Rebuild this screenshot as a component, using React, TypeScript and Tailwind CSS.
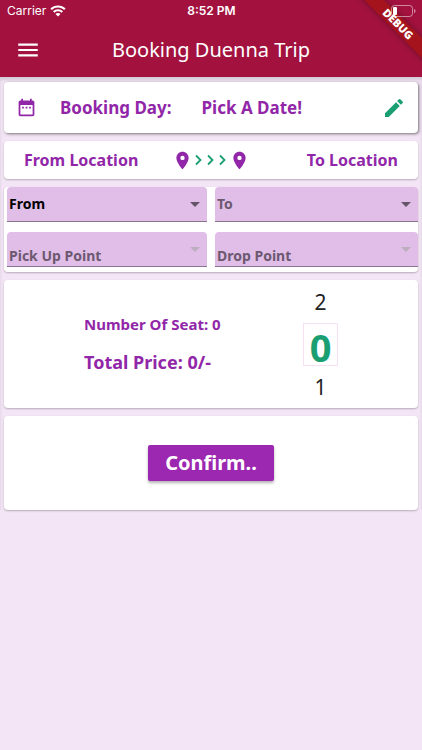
import React, { useState } from "react";
import { MdMenu, MdEdit, MdLocationOn, MdArrowDropDown } from "react-icons/md";

const CARD = "rounded bg-white shadow-[0_1px_2px_rgba(0,0,0,0.25)]";

interface PlaceSelectProps {
  label: string;
  active?: boolean;
  disabled?: boolean;
}

function PlaceSelect({ label, active, disabled }: PlaceSelectProps) {
  return (
    <div className="relative">
      <select
        aria-label={label}
        disabled={disabled}
        className={`block h-[35px] w-full appearance-none rounded-t border-b border-[#8b748f] bg-[#e1bee7] px-[2px] text-[14px] leading-5 font-bold opacity-100 outline-none ${
          active ? "text-black" : "text-[#6c5870]"
        } ${disabled ? "pt-[14px]" : ""}`}
      >
        <option>{label}</option>
      </select>
      <MdArrowDropDown
        className={`pointer-events-none absolute top-[5px] right-0 h-6 w-6 ${
          disabled ? "text-[#bcaebf]" : "text-[#655569]"
        }`}
      />
    </div>
  );
}

function StatusBar() {
  return (
    <div className="relative z-10 grid h-[22px] grid-cols-3 items-center pr-[6px] pl-[7px] font-[Inter,sans-serif] text-[12px] leading-4">
      <div className="flex items-center gap-1">
        <span>Carrier</span>
        <svg viewBox="0 0 16 12" className="h-3 w-4" fill="currentColor">
          <path d="M8 0.5C5 .5 2.400 1.600.4 3.500l1.500 1.500A8.700 8.700 0 0 1 8 2.600c2.400 0 4.500.9 6.100 2.400l1.500-1.500C13.600 1.600 11 .5 8 .5z" />
          <path d="M8 4.200c-1.900 0-3.700.8-5 2l1.500 1.500A5 5 0 0 1 8 6.300a5 5 0 0 1 3.500 1.400L13 6.200a7.200 7.200 0 0 0-5-2z" />
          <path d="M8 7.900c-1 0-1.900.4-2.500 1L8 11.500l2.500-2.600c-.6-.6-1.500-1-2.500-1z" />
        </svg>
      </div>
      <span className="text-center font-semibold">8:52 PM</span>
      <svg viewBox="0 0 25 12" className="h-3 w-[25px] justify-self-end">
        <rect x="0.500" y="0.500" width="21" height="11" rx="3" fill="none" stroke="currentColor" strokeOpacity="0.5" />
        <rect x="2" y="2" width="4" height="8" rx="1" fill="currentColor" />
        <path d="M23 4v4c1-.3 1.500-1 1.500-2S24 4.300 23 4z" fill="currentColor" fillOpacity="0.5" />
      </svg>
    </div>
  );
}

export default function App() {
  const [seats, setSeats] = useState(0);
  const above = (seats + 2) % 3;
  const below = (seats + 1) % 3;

  return (
    <div className="min-h-screen bg-[#f3e5f5] font-['Noto_Sans',sans-serif] text-[#9127a8]">
      <header className="relative overflow-hidden bg-[#a3123f] text-white">
        <StatusBar />
        <div className="grid h-[55px] grid-cols-[48px_1fr_48px] items-center px-1">
          <button type="button" aria-label="Menu" className="flex justify-center">
            <MdMenu className="h-[26px] w-[26px]" />
          </button>
          <h1 className="text-center text-[20px] leading-7">Booking Duenna Trip</h1>
        </div>
        {/* Debug ribbon */}
        <div className="absolute top-[17px] -right-10 flex h-[14px] w-32 rotate-45 items-center justify-center bg-[#a51418]/90 text-[11px] font-black shadow-[0_0_6px_rgba(0,0,0,0.35)]">
          DEBUG
        </div>
      </header>

      <main className="flex flex-col gap-2 px-1 pt-[5px] shadow-[inset_0_3px_3px_rgba(0,0,0,0.12)]">
        <section className="flex h-[51px] items-center rounded bg-white px-3 text-[17px] leading-6 font-bold shadow-[1px_1px_3px_rgba(0,0,0,0.5)]">
          <svg viewBox="0 0 24 24" className="h-[21px] w-[21px]" fill="currentColor">
            <path d="M9 11H7v2h2v-2zm4 0h-2v2h2v-2zm4 0h-2v2h2v-2zm2-7h-1V2h-2v2H8V2H6v2H5c-1.110 0-2 .9-2 2v14c0 1.100.89 2 2 2h14c1.100 0 2-.9 2-2V6c0-1.100-.9-2-2-2zm0 16H5V9h14v11z" />
          </svg>
          <span className="ml-[23px]">Booking Day:</span>
          <span className="ml-[30px]">Pick A Date!</span>
          <button type="button" aria-label="Edit date" className="ml-auto text-[#1a9f73]">
            <MdEdit className="h-6 w-6" />
          </button>
        </section>

        <section
          className={`${CARD} grid h-[38px] grid-cols-[1fr_auto_1fr] items-center px-5 text-[16px] leading-6 font-bold`}
        >
          <span>From Location</span>
          <div className="flex items-center gap-[2px]">
            <MdLocationOn className="h-[21px] w-[21px]" />
            <svg viewBox="0 0 32 12" className="h-3 w-8 text-[#1a9f73]" fill="none" stroke="currentColor" strokeWidth="1.800">
              <path d="M1 1.500 5.500 6 1 10.500M13 1.500 17.500 6 13 10.500M25 1.500 29.500 6 25 10.500" />
            </svg>
            <MdLocationOn className="h-[21px] w-[21px]" />
          </div>
          <span className="text-right">To Location</span>
        </section>

        <section className={`${CARD} grid grid-cols-[200fr_203fr] gap-x-2 gap-y-[10px] pb-[5px] pl-[3px]`}>
          <PlaceSelect label="From" active />
          <PlaceSelect label="To" />
          <PlaceSelect label="Pick Up Point" disabled />
          <PlaceSelect label="Drop Point" disabled />
        </section>

        <section className={`${CARD} flex h-32 items-center justify-between px-20`}>
          <div className="flex flex-col gap-4 font-bold">
            <p className="text-[15px] leading-5">Number Of Seat: {seats}</p>
            <p className="text-[18px] leading-6">Total Price: {seats * 500}/-</p>
          </div>
          <div className="flex flex-col items-center text-[21px] text-[#222222]">
            <button type="button" onClick={() => setSeats(above)} className="h-[42px] leading-[42px]">
              {above}
            </button>
            <output className="h-[43px] w-[35px] border border-[#f6e1f3] text-center text-[38px] leading-[46px] font-bold text-[#1a9f73]">
              {seats}
            </output>
            <button type="button" onClick={() => setSeats(below)} className="h-[42px] leading-[42px]">
              {below}
            </button>
          </div>
        </section>

        <section className={`${CARD} flex h-[94px] items-center justify-center`}>
          <button
            type="button"
            className="h-9 rounded-[2px] bg-[#9c27b0] px-[17px] text-[20px] leading-6 font-bold text-white shadow-[0_2px_3px_rgba(0,0,0,0.3)]"
          >
            Confirm..
          </button>
        </section>
      </main>
    </div>
  );
}
